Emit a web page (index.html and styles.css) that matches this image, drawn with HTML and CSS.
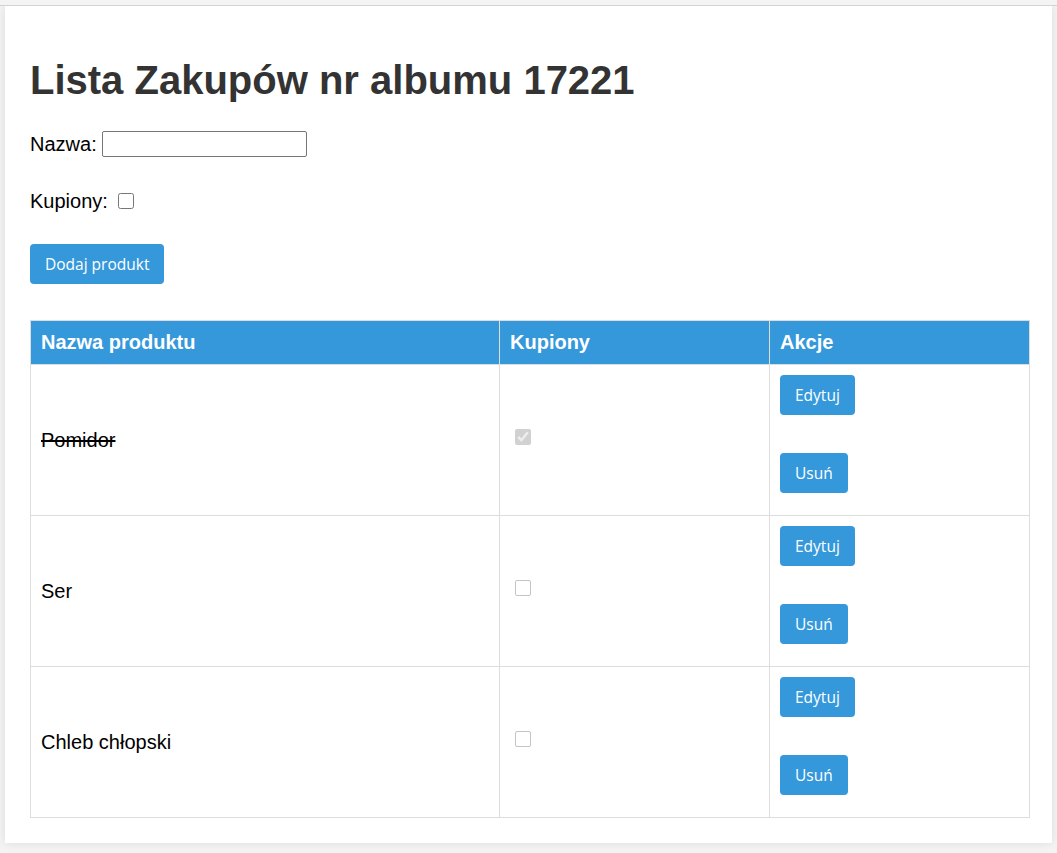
FILE: index.html
```html
<!DOCTYPE html>
<html lang="pl">
<head>
<meta charset="utf-8">
<title>Lista Zakupów</title>
<link rel="stylesheet" href="styles.css">
</head>
<body>
<div class="container">
  <h1 class="title">Lista Zakupów nr albumu 17221</h1>
  <form class="form">
    <div class="field">Nazwa:&nbsp;<input class="text-input" type="text"></div>
    <div class="field">Kupiony:&nbsp;<input class="check check-form" type="checkbox"></div>
    <button class="btn" type="button">Dodaj produkt</button>
  </form>
  <table class="list">
    <colgroup>
      <col class="col-name">
      <col class="col-bought">
      <col class="col-actions">
    </colgroup>
    <thead>
      <tr><th>Nazwa produktu</th><th>Kupiony</th><th>Akcje</th></tr>
    </thead>
    <tbody>
      <tr>
        <td><span class="bought">Pomidor</span></td>
        <td><input class="check check-cell" type="checkbox" checked disabled></td>
        <td><div class="actions"><button class="btn" type="button">Edytuj</button><button class="btn" type="button">Usuń</button></div></td>
      </tr>
      <tr>
        <td>Ser</td>
        <td><input class="check check-cell" type="checkbox" disabled></td>
        <td><div class="actions"><button class="btn" type="button">Edytuj</button><button class="btn" type="button">Usuń</button></div></td>
      </tr>
      <tr>
        <td>Chleb chłopski</td>
        <td><input class="check check-cell" type="checkbox" disabled></td>
        <td><div class="actions"><button class="btn" type="button">Edytuj</button><button class="btn" type="button">Usuń</button></div></td>
      </tr>
    </tbody>
  </table>
</div>
</body>
</html>
```

FILE: styles.css
```css
html {
  background: #f4f4f4;
}
body {
  margin: 5px 0 0;
  border-top: 1px solid #d2d2d2;
  padding: 0 5px 10px;
  font-family: "Liberation Sans", Arial, sans-serif;
  font-size: 20px;
  color: #000;
}
.container {
  background: #fff;
  padding: 25px;
  box-shadow: 0 0 10px rgba(0, 0, 0, 0.1);
}
.title {
  margin: 26px 0 27px;
  font-size: 40px;
  font-weight: bold;
  color: #333;
  line-height: 46px;
}
.form {
  display: flex;
  flex-direction: column;
  align-items: flex-start;
  gap: 29px;
}
.field {
  display: flex;
  align-items: center;
  height: 28px;
}
.text-input {
  box-sizing: border-box;
  width: 205px;
  height: 26px;
  margin: 0;
  border: 1px solid #767676;
  border-radius: 2px;
  padding: 1px 2px;
  font: inherit;
}
.check {
  width: 16px;
  height: 16px;
  margin: 0 0 0 5px;
  vertical-align: middle;
}
.check-cell {
  display: block;
  margin: 0 0 6px 5px;
}
.check-cell:disabled:not(:checked) {
  appearance: none;
  box-sizing: border-box;
  border: 1px solid #c4c4c4;
  border-radius: 2px;
  background: #fff;
}
.btn {
  height: 40px;
  padding: 0 15px;
  border: none;
  border-radius: 4px;
  background: #3498db;
  color: #fff;
  font-family: "Open Sans", "Noto Sans", sans-serif;
  font-size: 15.5px;
  cursor: pointer;
}
.list {
  margin-top: 36px;
  width: 999px;
  border-collapse: collapse;
  table-layout: fixed;
}
.col-name { width: 469px; }
.col-bought { width: 270px; }
.col-actions { width: 260px; }
.list th,
.list td {
  border: 1px solid #ddd;
  padding: 10px;
  text-align: left;
  line-height: 23px;
}
.list th {
  background: #3498db;
  color: #fff;
  font-weight: bold;
}
.list td {
  vertical-align: middle;
}
.bought {
  text-decoration: line-through;
}
.actions {
  display: flex;
  flex-direction: column;
  align-items: flex-start;
  gap: 38px;
  padding-bottom: 12px;
}
```
